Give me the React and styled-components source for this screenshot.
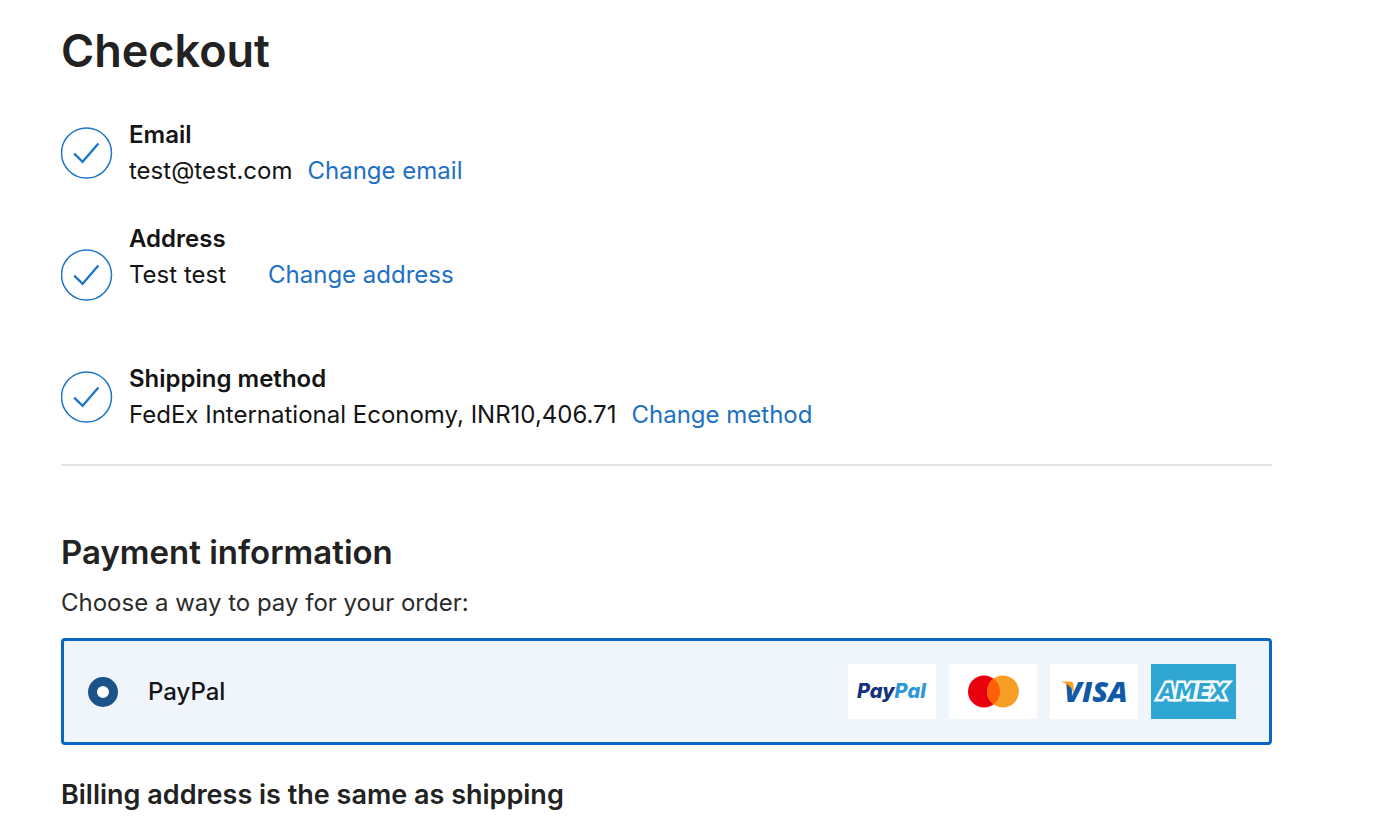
import React, { useState } from "react";
import styled, { createGlobalStyle } from "styled-components";

const GlobalStyle = createGlobalStyle`
  * {
    box-sizing: border-box;
  }
  body {
    margin: 0;
    background-color: #fff;
    color: #141414;
    font-family: Inter, "Liberation Sans", sans-serif;
    font-size: 24px;
    line-height: 36px;
  }
`;

const Page = styled.main`
  padding: 23px 128px 14px 61px;
`;

const Title = styled.h1`
  margin: 0 0 38px;
  font-size: 45px;
  font-weight: 600;
  line-height: 56px;
  color: #222;
`;

const Steps = styled.section`
  display: flex;
  flex-direction: column;
  gap: 32px;
  padding-bottom: 31px;
  border-bottom: 2px solid #e4e4e4;
`;

const StepRow = styled.div`
  display: flex;
  align-items: center;
  gap: 16px;
`;

const CheckIcon = styled.svg`
  flex: none;
  width: 52px;
  height: 52px;
  fill: none;
  stroke: #1b75c9;
`;

const StepText = styled.div`
  min-height: ${({ $lines }) => $lines * 36}px;
`;

const StepLabel = styled.h2`
  margin: 0;
  font-size: 24px;
  font-weight: 600;
  line-height: 36px;
`;

const StepValue = styled.div`
  display: flex;
  flex-wrap: wrap;
  column-gap: ${({ $wide }) => ($wide ? "42px" : "15px")};
`;

const ChangeLink = styled.a`
  color: #2070c4;
  text-decoration: none;

  &:hover {
    text-decoration: underline;
  }
`;

const Payment = styled.section`
  padding-top: 66px;
`;

const SectionTitle = styled.h2`
  margin: 0;
  font-size: 33px;
  font-weight: 600;
  line-height: 40px;
  color: #222;
`;

const Hint = styled.p`
  margin: 13px 0 17px;
  color: #2b2b2b;
`;

const Option = styled.label`
  display: flex;
  align-items: center;
  gap: 30px;
  padding: 23px 33px 23px 24px;
  border: 3px solid #0a66c2;
  border-radius: 4px;
  background-color: #f0f5fc;
  font-weight: 500;
  cursor: pointer;
`;

const Radio = styled.input`
  appearance: none;
  flex: none;
  width: 30px;
  height: 30px;
  margin: 0;
  border: 2px solid #1a5389;
  border-radius: 50%;
  background-color: #fff;
  cursor: pointer;

  &:checked {
    border-width: 9px;
  }
`;

const CardList = styled.span`
  display: flex;
  gap: 13px;
  margin-left: auto;
`;

const Card = styled.svg`
  display: block;
  width: ${({ $width }) => $width}px;
  height: 55px;
  background-color: ${({ $color }) => $color || "#fff"};
`;

const Billing = styled.h3`
  margin: 32px 0 0;
  font-size: 27px;
  font-weight: 600;
  line-height: 36px;
  color: #222;
`;

const steps = [
  { label: "Email", value: "test@test.com", link: "Change email", lines: 2 },
  {
    label: "Address",
    value: "Test test",
    link: "Change address",
    lines: 3,
    wide: true,
  },
  {
    label: "Shipping method",
    value: "FedEx International Economy, INR10,406.71",
    link: "Change method",
    lines: 2,
  },
];

const Step = ({ data }) => (
  <StepRow>
    <CheckIcon viewBox="0 0 52 52" aria-hidden="true">
      <circle cx="25.5" cy="26" r="25" strokeWidth="1.5" />
      <path d="M13.2 26.6L21.6 34.800L37.400 16.600" strokeWidth="2.3" />
    </CheckIcon>
    <StepText $lines={data.lines}>
      <StepLabel>{data.label}</StepLabel>
      <StepValue $wide={data.wide}>
        <span>{data.value}</span>
        <ChangeLink href="#">{data.link}</ChangeLink>
      </StepValue>
    </StepText>
  </StepRow>
);

const PayPalCard = () => (
  <Card $width={88} viewBox="0 0 88 55">
    <text
      x="9"
      y="34"
      fontFamily="Inter, sans-serif"
      fontSize="20"
      fontWeight="800"
      fontStyle="italic"
      fill="#14307f"
    >
      Pay<tspan fill="#2e97d8">Pal</tspan>
    </text>
  </Card>
);

const MastercardCard = () => (
  <Card $width={88} viewBox="0 0 88 55" role="img" aria-label="Mastercard">
    <circle cx="35" cy="27.5" r="16" fill="#e9000f" />
    <circle cx="54" cy="27.5" r="16" fill="#f79f24" />
    <path
      d="M44.5 14.6a16 16 0 0 1 0 25.8a16 16 0 0 1 0-25.8z"
      fill="#ff5e0a"
    />
  </Card>
);

const VisaCard = () => (
  <Card $width={88} viewBox="0 0 88 55">
    <text
      x="14"
      y="38"
      fontFamily="Open Sans, sans-serif"
      fontSize="29"
      fontWeight="800"
      fontStyle="italic"
      fill="#1159a6"
    >
      VISA
    </text>
    <path d="M11 17.500h9.500q2.500 0 2.800 2.500l.8 9q-3.500-8.500-13.100-11.500z" fill="#f5a020" />
  </Card>
);

const AmexCard = () => (
  <Card $width={85} $color="#2fa6d2" viewBox="0 0 85 55">
    <text
      x="8"
      y="35"
      fontFamily="DejaVu Sans, sans-serif"
      fontSize="21"
      fontWeight="700"
      fontStyle="italic"
      fill="#2fa6d2"
      stroke="#f2fafd"
      strokeWidth="5"
      paintOrder="stroke"
    >
      AMEX
    </text>
  </Card>
);

const App = () => {
  const [method, setMethod] = useState("paypal");

  return (
    <>
      <GlobalStyle />
      <Page>
        <Title>Checkout</Title>
        <Steps>
          {steps.map((step) => (
            <Step key={step.label} data={step} />
          ))}
        </Steps>
        <Payment>
          <SectionTitle>Payment information</SectionTitle>
          <Hint>Choose a way to pay for your order:</Hint>
          <Option htmlFor="paypal">
            <Radio
              type="radio"
              id="paypal"
              name="method"
              value="paypal"
              checked={method === "paypal"}
              onChange={(e) => setMethod(e.target.value)}
            />
            <span>PayPal</span>
            <CardList>
              <PayPalCard />
              <MastercardCard />
              <VisaCard />
              <AmexCard />
            </CardList>
          </Option>
          <Billing>Billing address is the same as shipping</Billing>
        </Payment>
      </Page>
    </>
  );
};

export default App;
